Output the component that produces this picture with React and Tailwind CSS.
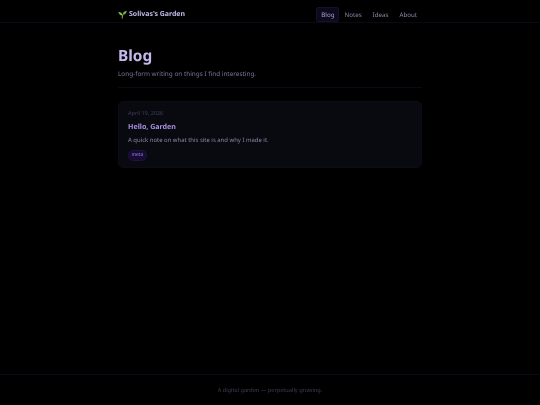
export default function App() {
  return (
    <div className="min-h-[405px] bg-black flex flex-col font-['Noto_Sans',sans-serif] [text-rendering:geometricPrecision]">
      <header className="h-[23px] border-b border-[#0a0916] flex justify-center pt-[7px]">
        <div className="w-[304px] h-[15px] flex items-center justify-between will-change-[opacity]">
          <div className="flex items-center gap-[2px]">
            <svg width="9" height="9" viewBox="0 0 16 16" className="shrink-0">
              <path d="M7.5 15 C7.6 12 7.8 10 8.4 8.2" stroke="#6f9e3a" strokeWidth="2.2" fill="none" />
              <path d="M8 9.5 C5 10 2 8 .5 3.5 C4.5 3.5 7.5 5 8 9.5Z" fill="#8bc34a" />
              <path d="M8.4 8.5 C8.5 5 11 2 15.5 1.5 C15.5 5.5 12.5 8.5 8.4 8.5Z" fill="#7cb342" />
            </svg>
            <span className="text-[6.95px] leading-[12px] font-bold text-[#c4b9ea]">Solivas's Garden</span>
          </div>
          <nav className="flex items-center text-[6.2px] leading-[13px] text-[#8a85a6]">
            <a className="px-[4px] rounded-[2px] border border-[#14112a] bg-[#0c0a1a] text-[#a99cdc]">Blog</a>
            <a className="px-[5px]">Notes</a>
            <a className="ml-[1px] px-[5px]">Ideas</a>
            <a className="ml-[1px] px-[5px]">About</a>
          </nav>
        </div>
      </header>
      <main className="flex-1 w-[304px] mx-auto pt-[24px] will-change-[opacity]">
        <h1 className="text-[15.4px] leading-[18px] font-bold text-[#c4b9ea]">Blog</h1>
        <p className="mt-[3px] text-[6.42px] leading-[11px] text-[#7c7599]">Long-form writing on things I find interesting.</p>
        <hr className="mt-[8px] border-0 border-t border-[#0a0916]" />
        <article className="mt-[13px] h-[67px] rounded-[5px] border border-[#0c0b16] bg-[#090910] pt-[7px] px-[9px]">
          <div className="text-[5.5px] leading-[9px] text-[#423d5c]">April 19, 2026</div>
          <h2 className="mt-[3px] text-[7.1px] leading-[12px] font-bold text-[#a690e2]">Hello, Garden</h2>
          <p className="mt-[2px] text-[5.95px] leading-[11px] text-[#8d86a8]">A quick note on what this site is and why I made it.</p>
          <span className="mt-[4px] block w-fit rounded-full border border-[#1f1340] bg-[#170b36] px-[2.5px] text-[4.9px] leading-[9px] text-[#9a84d8]">meta</span>
        </article>
      </main>
      <footer className="h-[31px] border-t border-[#0a0916] flex items-center justify-center text-[5.6px] text-[#423d5c]">
        <span className="will-change-[opacity]">A digital garden — perpetually growing.</span>
      </footer>
    </div>
  );
}
